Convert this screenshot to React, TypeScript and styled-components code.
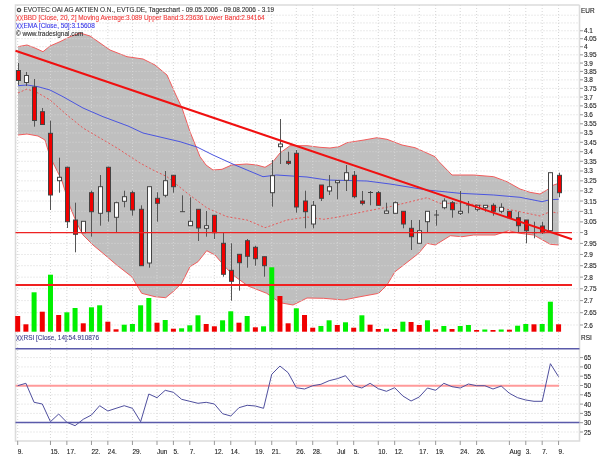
import React from "react";
import styled, { createGlobalStyle } from "styled-components";

const Global = createGlobalStyle`
  html, body { margin: 0; padding: 0; background: #fff; }
  body { font-family: "Liberation Sans", Arial, sans-serif; }
`;

const Page = styled.div`
  position: relative;
  width: 614px;
  height: 461px;
  overflow: hidden;
  background: #fff;
  filter: blur(0.35px);
`;
const Plot = styled.svg`
  display: block;
  width: 614px;
  height: 461px;
`;
const Legend = styled.div<{ $left: number; $top: number }>`
  position: absolute;
  left: ${(p) => p.$left}px;
  top: ${(p) => p.$top}px;
  display: flex;
  flex-direction: column;
`;
const LegendRow = styled.div<{ $color: string }>`
  display: flex;
  align-items: center;
  height: 8px;
  line-height: 8px;
  font-size: 6.45px;
  -webkit-text-stroke: 0.12px ${(p) => p.$color};
  white-space: nowrap;
  color: ${(p) => p.$color};
`;
const Glyph = styled.svg`
  flex: none;
  width: 7.5px;
  height: 6px;
`;
const AxisLabel = styled.text`
  font-family: "Liberation Sans", Arial, sans-serif;
  font-size: 6.45px;
  fill: #222;
  stroke: #222;
  stroke-width: 0.12px;
  dominant-baseline: central;
`;

const X0 = 17.7;
const STEP = 8.195;
const xAt = (i: number) => X0 + STEP * i;
const priceY = (p: number) => 325 - 646 * Math.log(p / 2.6);
const rsiY = (r: number) => 385.5 - (r - 50) * 1.86;

type Kind = "r" | "w" | "d";
// wick top, wick bottom, body top, body bottom, kind
const candles: [number, number, number, number, Kind][] = [
  [63, 85, 70.5, 80.5, "r"], [72, 86, 75.5, 82.5, "w"], [79, 126.7, 87, 120.5, "r"], [108, 125, 111.7, 124.5, "r"],
  [120.7, 210, 133.3, 195, "r"], [157.7, 192.7, 177.3, 180.7, "w"], [166.7, 228, 167.3, 221.7, "r"], [202.7, 252.3, 220, 234.3, "r"],
  [221.3, 232.7, 221.3, 232.7, "w"], [190.7, 236.7, 192.7, 211.7, "r"], [175, 225.7, 186.7, 213.3, "w"], [166.7, 221.7, 167.3, 211.7, "r"],
  [201.7, 232.7, 202.7, 217.3, "w"], [190.7, 207.3, 196.7, 201.3, "w"], [190.7, 215.7, 192.7, 210, "r"], [205.3, 265.7, 209.3, 265.7, "r"],
  [186.7, 267.7, 186.7, 263, "w"], [192.3, 221.7, 198.3, 203.3, "r"], [171, 197.3, 180.7, 195.3, "w"], [175.3, 192.7, 175.3, 186.7, "r"],
  [195.3, 211.7, 211.7, 211.7, "d"], [197.3, 225.7, 221.3, 225.7, "w"], [209.3, 241, 209.3, 228, "r"], [211, 236.7, 225.7, 228.3, "w"],
  [215.3, 239, 215.3, 232.7, "r"], [232.7, 276.7, 243.3, 274.3, "r"], [243.3, 300.7, 270.3, 281.3, "r"], [254.3, 290.7, 254.3, 262.7, "r"],
  [239, 267.7, 240.7, 256.3, "r"], [245.7, 265.7, 247.3, 258.7, "r"], [256.7, 276.7, 256.7, 265.7, "r"], [160, 206.7, 175.7, 192.7, "w"],
  [119, 164, 144, 146.7, "w"], [151.7, 165, 161.3, 163.3, "r"], [150, 212.7, 153.3, 207, "r"], [190.7, 228.3, 201, 211.7, "r"],
  [201, 228.3, 205.3, 224, "w"], [185, 201, 185, 198.3, "r"], [175, 195, 186.7, 191, "w"], [180.7, 199.3, 180.7, 182.7, "w"],
  [165, 191, 172.7, 180.3, "w"], [171, 198.3, 175.3, 196.7, "r"], [191, 205.3, 201, 203.3, "r"], [191, 205.3, 192.5, 192.5, "d"],
  [191, 205.3, 192.7, 205.3, "r"], [202.7, 213.3, 211, 213.3, "w"], [201.5, 213.3, 202.7, 213.3, "w"], [211.3, 228.3, 211.3, 224, "r"],
  [220, 250, 228.3, 236.7, "r"], [220, 243.3, 230.7, 243.3, "w"], [211.3, 232.7, 211.3, 221.7, "w"], [210, 225.7, 215, 215, "d"],
  [198.3, 209.3, 201, 207.7, "w"], [201, 217.7, 202.7, 209.7, "r"], [191, 215, 211.3, 213.3, "w"], [201, 213.3, 205, 205, "d"],
  [205.3, 211.3, 205.3, 209.3, "w"], [205.3, 211.7, 205.3, 207.7, "w"], [203.3, 215.7, 205.3, 211.3, "r"], [203.3, 213.3, 207.3, 211.3, "w"],
  [211.3, 217.7, 211.3, 217.7, "r"], [211.7, 232.7, 217.7, 225.7, "r"], [220, 243.3, 220, 230.7, "r"], [221.7, 238.3, 232.7, 232.7, "d"],
  [221.7, 234, 226, 232.7, "r"], [172.7, 230.7, 172.7, 230.7, "w"], [172.7, 197.3, 175.3, 192.7, "r"],
];

// top of the bar, colour flag g/r
const volumes: [number, "g" | "r"][] = [
  [316, "r"], [324.3, "r"], [292.3, "g"], [311.7, "r"], [274.7, "g"], [315, "r"], [312.3, "g"], [308, "g"], [323.3, "r"],
  [307.3, "g"], [305.3, "g"], [321.7, "r"], [329.3, "r"], [324.7, "g"], [324, "g"], [305.3, "g"], [298, "g"], [322.7, "r"],
  [320, "g"], [328.7, "r"], [328.3, "g"], [325.3, "g"], [315.3, "g"], [324, "r"], [326.3, "r"], [320.3, "g"], [311.3, "g"],
  [322.7, "r"], [316, "g"], [327.3, "r"], [326.3, "g"], [267.3, "g"], [296, "r"], [323.3, "r"], [308.3, "g"], [315, "r"],
  [327.7, "r"], [326, "g"], [320.3, "g"], [325, "r"], [322.3, "g"], [327.7, "r"], [315.3, "g"], [324.7, "r"], [329, "r"],
  [328.7, "g"], [329, "r"], [321.7, "g"], [322, "r"], [325, "r"], [320.3, "g"], [329.3, "r"], [326, "g"], [329, "r"], [326, "g"],
  [325, "g"], [330, "r"], [329.5, "g"], [330, "r"], [329.5, "g"], [329.7, "r"], [325.7, "g"], [324, "g"], [324.3, "r"], [324, "g"],
  [301.7, "g"], [324.3, "r"],
];

const upper = "18,46.7 27,45 35,48 43,51.7 50,46 60,41.7 70,36.7 80,33 90,36 100,43 110,50 127,56.7 143,59 155,65 167,75 175,93 182,108 190,131.7 200,156.7 206,165 213,170 222,169.3 231.7,165 246.7,164 256.7,165 265,167.3 271.7,163.3 280,153 290,145.7 307,145.7 320,147.3 330,148 339,146.7 347,142.7 364,140 377,137.7 387,139.3 402,145 415,147.7 424,151.7 435,156.7 439,161.7 452,175 473.7,175 493.7,176.7 507,181.7 520,189 530,192.3 540,194 547,190 553.7,185 558.7,183.3";
const lower = "558.7,245 550.3,244.3 533.7,235 520,233.3 508.7,230.7 495,235 473.7,235 462,236.7 450.3,235.7 435.3,245 427,243.3 418.7,253.3 403.7,265 395,271.7 387,285 378.7,293.3 357,297.3 343.7,300 323.7,298.3 307,298 293,305 280,302.7 266.7,293.3 248,286 233,275 225,266.7 215,255 206.7,250.7 198,261.7 190,266.7 181.7,283.3 173,291.7 165.7,297.7 155,296.7 141.7,293.3 131.7,276.7 116.7,265 103,253.3 93,245 83,235 76.7,223 70,206.7 61.7,180 55,166.7 50,156.7 45,140 38,136 27,134 18,135";
const ema = "18,85.7 27,85 38,86.7 50,90 63,96.7 83,108 103,116.7 128,126 143,133 160,137 180,141.7 197,147 213,155 224,160 235,165 263,176.7 276.7,175 307,177 327,180 367,181 390,184 427,190 460,193.3 493.7,195 520,197.3 542,201.7 550,199.7 558.7,199.3";
const ma = "18,93 27,89 38,93 50,100 67,115 83,128 100,138 117,148 140,163 153,170 167,176.7 187,193 207,208 227,216.7 247,220 265,227.7 287,220 307,217 323.7,219.3 340,216.7 367,211 390,206.7 427,197.7 440,203.3 463.7,203.3 493.7,206.7 520,211.7 540,216 550,211.7 558,213";
const rsi = [
  385.7, 383.3, 402.3, 404, 421.7, 414, 422.3, 425.7, 419.3, 415, 405.7, 411, 408.3, 405.7, 408.3, 421.7, 394, 397.7, 390.3, 392.3,
  399.3, 401.3, 403.3, 402.3, 404, 413.7, 416, 407.7, 405.3, 406, 408.3, 374.3, 366, 372.7, 387.7, 389, 385.7, 384.3, 380.7, 378.7,
  375.7, 385.7, 388, 383.3, 388.7, 391.3, 387.7, 396, 401, 397, 388, 390.3, 383.3, 386.7, 388, 384, 385.7, 385.7, 389, 386, 393.3,
  397.7, 400, 401.3, 401.3, 363.7, 376.7,
];
const ticks: [number, string][] = [
  [0, "9."], [4, "15."], [6, "17."], [9, "22."], [11, "24."], [14, "29."], [17, "Jun"], [19, "5."], [21, "7."], [24, "12."],
  [26, "14."], [29, "19."], [31, "21."], [34, "26."], [36, "28."], [39, "Jul"], [41, "5."], [44, "10."], [46, "12."], [49, "17."],
  [51, "19."], [54, "24."], [56, "26."], [60, "Aug"], [62, "3."], [64, "7."], [66, "9."],
];
const LEFT = 15.5;
const RIGHT = 579.5;
const priceLabels = Array.from({ length: 31 }, (_, i) => +(2.6 + i * 0.05).toFixed(2));
const rsiLabels = [25, 30, 35, 40, 45, 50, 55, 60, 65];
const gridPrices = [...priceLabels, 4.15, 4.2];

const CrossMark = ({ color }: { color: string }) => (
  <Glyph viewBox="0 0 7.5 6">
    <path d="M0.3 0.2 L3.4 5.8 M3.4 0.2 L0.3 5.8 M3.9 0.2 L7 5.8 M7 0.2 L3.9 5.8" stroke={color} strokeWidth="0.7" fill="none" />
  </Glyph>
);
const GearMark = () => (
  <Glyph viewBox="0 0 7.5 6">
    <circle cx="3" cy="3" r="1.8" fill="none" stroke="#333" strokeWidth="1" />
    <circle cx="3" cy="3" r="0.5" fill="#333" />
  </Glyph>
);

export default function App() {
  return (
    <Page>
      <Global />
      <Plot viewBox="0 0 614 461">
        {/* frame */}
        <path d={`M${RIGHT} 5 H${LEFT} V441 H${RIGHT} V5`} fill="none" stroke="#dcdcdc" strokeWidth="1.6" />
        {/* bands */}
        <polygon points={`${upper} ${lower}`} fill="#bfbfbf" />
        <polyline points={upper} fill="none" stroke="#f25c5c" strokeWidth="1" />
        <polyline points={lower} fill="none" stroke="#f25c5c" strokeWidth="1" />
        {/* grid */}
        <g stroke="#d6d6d6" strokeWidth="1" strokeDasharray="1 2">
          {gridPrices.map((p) => (
            <line key={p} x1={LEFT} x2={RIGHT} y1={priceY(p)} y2={priceY(p)} />
          ))}
          {rsiLabels.map((r) => (
            <line key={r} x1={LEFT} x2={RIGHT} y1={rsiY(r)} y2={rsiY(r)} />
          ))}
          {ticks.map(([i]) => (
            <line key={i} x1={xAt(i)} x2={xAt(i)} y1={5} y2={441} />
          ))}
        </g>
        {/* volume */}
        {volumes.map(([top, c], i) => (
          <rect key={i} x={xAt(i) - 2.5} y={top} width={5} height={331.7 - top} fill={c === "g" ? "#00f000" : "#f00000"} />
        ))}
        {/* averages */}
        <polyline points={ma} fill="none" stroke="#e85a5a" strokeWidth="1" strokeDasharray="2 2" />
        <polyline points={ema} fill="none" stroke="#4a55e0" strokeWidth="1" />
        {/* candles */}
        {candles.map(([wt, wb, bt, bb, k], i) => {
          const x = Math.round(xAt(i)) + 0.5;
          return (
            <g key={i}>
              <line x1={x} x2={x} y1={wt} y2={wb} stroke="#555" strokeWidth="1" />
              {k === "d" ? (
                <line x1={x - 2.5} x2={x + 2.5} y1={bt} y2={bt} stroke="#444" strokeWidth="1" />
              ) : (
                <rect x={x - 2} y={bt} width={4} height={bb - bt} fill={k === "r" ? "#f00000" : "#fff"} stroke="#444" strokeWidth="1" />
              )}
            </g>
          );
        })}
        {/* horizontal and trend lines */}
        <line x1={LEFT} x2={572} y1={232.7} y2={232.7} stroke="#ee2222" strokeWidth="1.3" />
        <line x1={LEFT} x2={572} y1={285} y2={285} stroke="#f02020" strokeWidth="1.8" />
        <line x1={LEFT} x2={572} y1={50.7} y2={239.3} stroke="#f01010" strokeWidth="2" />
        {/* rsi */}
        <line x1={LEFT} x2={RIGHT} y1={348.7} y2={348.7} stroke="#5a5aaa" strokeWidth="1.5" />
        <line x1={LEFT} x2={RIGHT} y1={422.5} y2={422.5} stroke="#5a5aaa" strokeWidth="1.5" />
        <line x1={LEFT} x2={559} y1={385.7} y2={385.7} stroke="#ff9a9a" strokeWidth="2" />
        <polyline points={rsi.map((y, i) => `${xAt(i)},${y}`).join(" ")} fill="none" stroke="#4f4f9e" strokeWidth="1" />
        {/* axes */}
        {priceLabels.map((p) => (
          <g key={p}>
            <line x1={580} x2={583} y1={priceY(p)} y2={priceY(p)} stroke="#999" />
            <AxisLabel x={584} y={priceY(p)}>{String(p)}</AxisLabel>
          </g>
        ))}
        {rsiLabels.map((r) => (
          <g key={r}>
            <line x1={580} x2={583} y1={rsiY(r)} y2={rsiY(r)} stroke="#999" />
            <AxisLabel x={584} y={rsiY(r)}>{String(r)}</AxisLabel>
          </g>
        ))}
        <AxisLabel x={581} y={10}>EUR</AxisLabel>
        <AxisLabel x={581} y={337}>RSI</AxisLabel>
        {ticks.map(([i, label]) => (
          <g key={i}>
            <line x1={xAt(i)} x2={xAt(i)} y1={441} y2={445} stroke="#999" />
            <AxisLabel x={xAt(i)} y={451}>{label}</AxisLabel>
          </g>
        ))}
      </Plot>
      <Legend $left={16} $top={6}>
        <LegendRow $color="#333">
          <GearMark />EVOTEC OAI AG AKTIEN O.N., EVTG.DE, Tageschart - 09.05.2006 - 09.08.2006 - 3.19
        </LegendRow>
        <LegendRow $color="#f03a3a">
          <CrossMark color="#f03a3a" />BBD [Close, 20, 2] Moving Average:3.089 Upper Band:3.23636 Lower Band:2.94164
        </LegendRow>
        <LegendRow $color="#3a3ae8">
          <CrossMark color="#3a3ae8" />EMA [Close, 50]:3.15608
        </LegendRow>
        <LegendRow $color="#333">© www.tradesignal.com</LegendRow>
      </Legend>
      <Legend $left={16} $top={334}>
        <LegendRow $color="#3f3f8f">
          <CrossMark color="#3f3f8f" />RSI [Close, 14]:54.910876
        </LegendRow>
      </Legend>
    </Page>
  );
}
